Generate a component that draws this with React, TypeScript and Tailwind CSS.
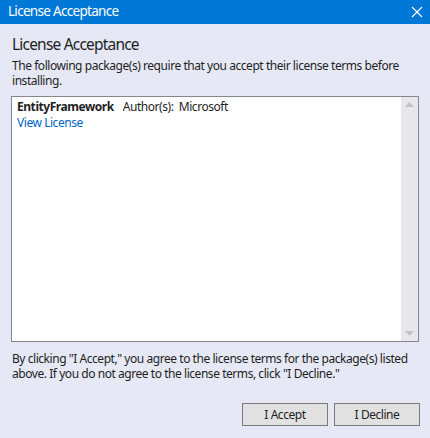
export default function App() {
  return (
    <div
      className="w-[430px] h-[438px] bg-[#e6e9f5] flex flex-col text-[#1e1e1e]"
      style={{ fontFamily: "'Noto Sans', 'Open Sans', sans-serif" }}
    >
      {/* Title bar */}
      <div className="h-[24px] bg-[#0078d7] flex items-center justify-between pl-[8px] pr-[6px] text-white">
        <span className="text-[13.5px] leading-none tracking-[-0.7px]">License Acceptance</span>
        <svg width="12" height="12" viewBox="0 0 12 12" className="mr-[1px]">
          <path d="M1 1 L11 11 M11 1 L1 11" stroke="white" strokeWidth="1.2" />
        </svg>
      </div>

      <div className="flex flex-col px-[11px] pt-[9px] text-[12px] tracking-[-0.45px]">
        <h1 className="text-[15.5px] leading-[22px] pl-[1px] tracking-[-0.8px]">License Acceptance</h1>
        <p className="leading-[15px] mt-[3px] pl-[1px]">
          The following package(s) require that you accept their license terms before installing.
        </p>

        {/* Package list */}
        <div className="mt-[8px] h-[246px] border border-[#828790] bg-white flex">
          <div className="flex-1 pl-[5px] pt-[2px] leading-[16px]">
            <div className="flex">
              <span className="font-bold">EntityFramework</span>
              <span className="ml-[9px]">Author(s):&nbsp;&nbsp;Microsoft</span>
            </div>
            <div>
              <a className="text-[#0066cc]">View License</a>
            </div>
          </div>
          <div className="w-[17px] bg-[#e8e8ec] flex flex-col justify-between items-center py-[5px]">
            <svg width="9" height="5" viewBox="0 0 9 5">
              <path d="M0 5 L4.5 0 L9 5 Z" fill="#c2c3c9" />
            </svg>
            <svg width="9" height="5" viewBox="0 0 9 5">
              <path d="M0 0 L9 0 L4.5 5 Z" fill="#c2c3c9" />
            </svg>
          </div>
        </div>

        <p className="leading-[15px] mt-[9px] pl-[1px]">
          By clicking "I Accept," you agree to the license terms for the package(s) listed above. If you do not agree to the license terms, click "I Decline."
        </p>

        <div className="flex justify-end gap-[6px] mt-[22px]">
          <button className="w-[86px] h-[23px] border border-[#7a7a7a] bg-[#e1e1e1] text-[#1e1e1e]">
            I Accept
          </button>
          <button className="w-[86px] h-[23px] border border-[#7a7a7a] bg-[#e1e1e1] text-[#1e1e1e] mr-[-1px]">
            I Decline
          </button>
        </div>
      </div>
    </div>
  );
}
